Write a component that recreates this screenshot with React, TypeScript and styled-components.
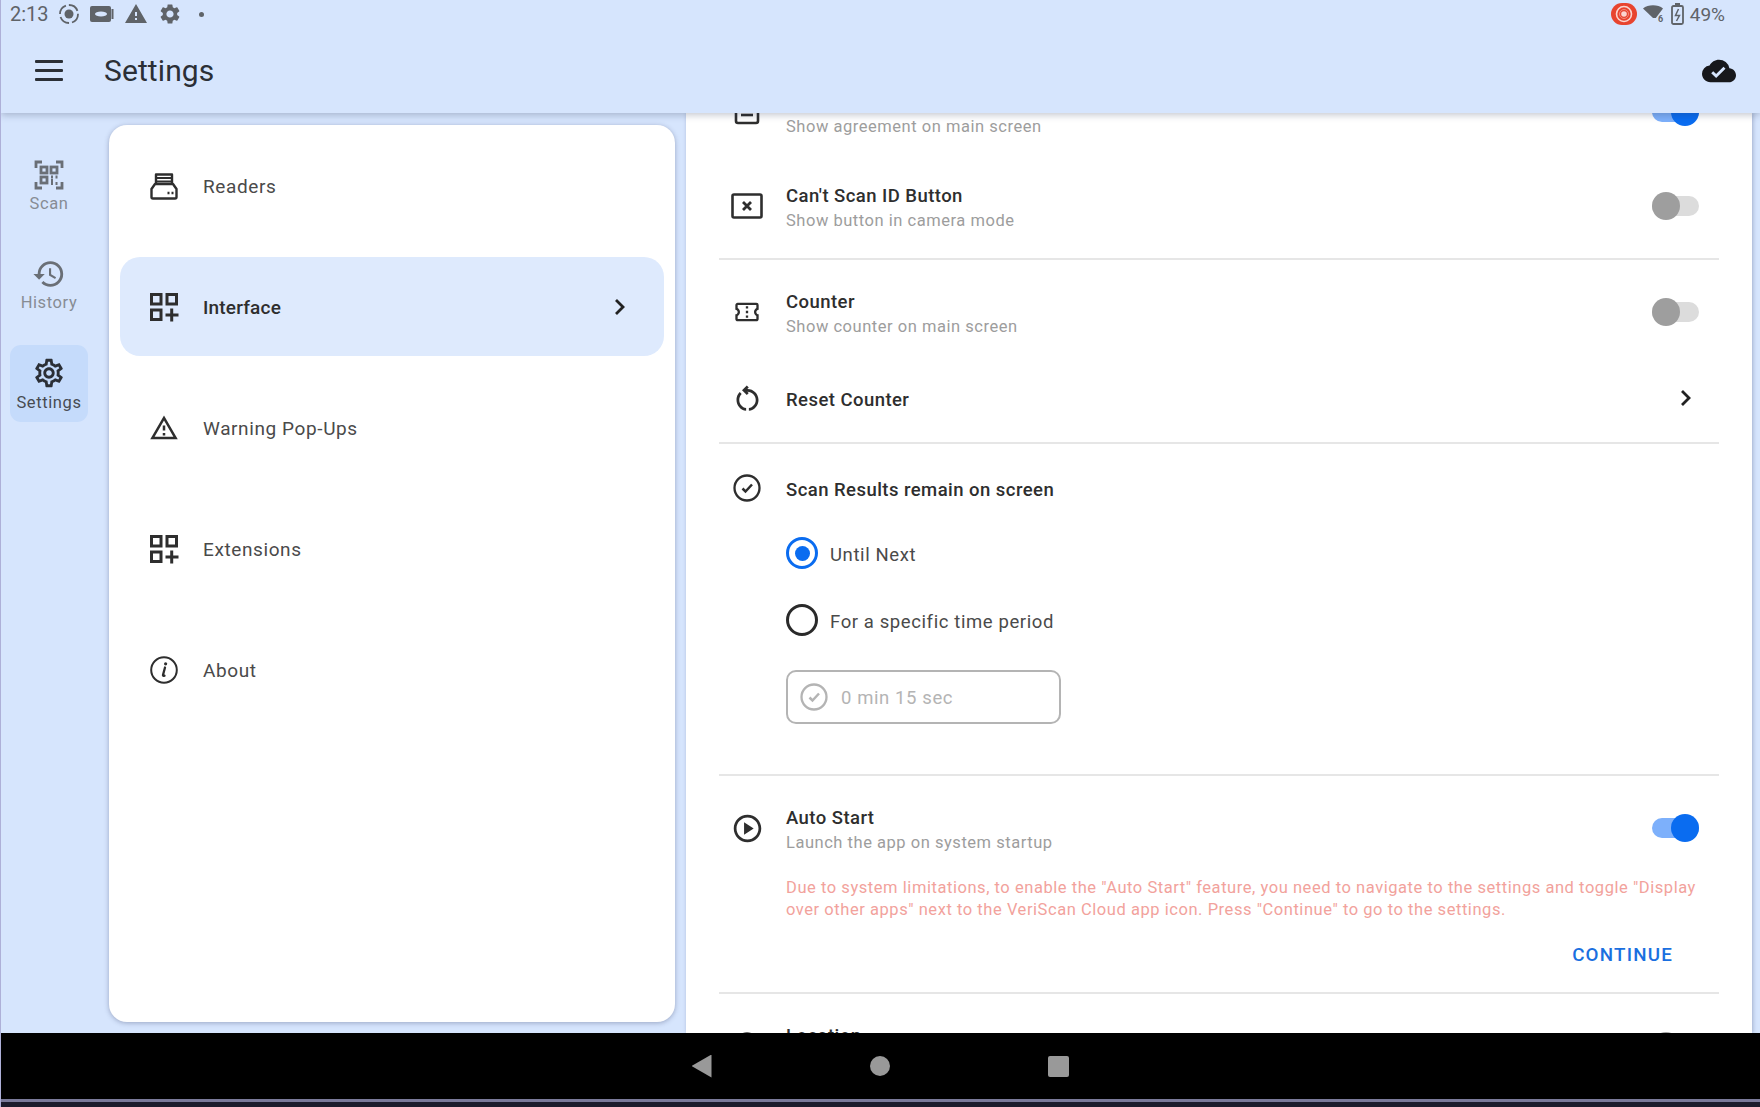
import React from 'react';
import styled, { createGlobalStyle } from 'styled-components';
import { MdHistory, MdOutlineSettings, MdOutlineWarningAmber, MdCloudDone, MdOutlinePlayCircle, MdOutlineConfirmationNumber, MdOutlineRestartAlt, MdWarning, MdSettings } from 'react-icons/md';

const Global = createGlobalStyle`
  html, body { margin: 0; padding: 0; background: #d6e5fd; }
  body { font-family: Roboto, "Liberation Sans", sans-serif; }
  * { box-sizing: border-box; }
`;

const Page = styled.div`
  width: 1760px;
  height: 1107px;
  display: flex;
  flex-direction: column;
  overflow: hidden;
  background: #d6e5fd;
  border-left: 1px solid #aeb0d8;
`;

const Header = styled.header`
  height: 113px;
  flex: none;
  position: relative;
  z-index: 2;
  background: #d6e5fd;
  box-shadow: 0 2px 7px rgba(40, 50, 80, 0.28);
`;

const StatusBar = styled.div`
  height: 30px;
  display: flex;
  align-items: center;
  padding: 0 35px 2px 9px;
  color: #5f6368;
  font-size: 19px;
`;

const StatusGroup = styled.div<{ $gap: number }>`
  display: flex;
  align-items: center;
  gap: ${(p) => p.$gap}px;
`;

const Time = styled.span`
  width: 38px;
  font-size: 20px;
`;

const StatusDot = styled.span`
  width: 5px;
  height: 5px;
  margin-left: 7px;
  border-radius: 50%;
  background: #5f6368;
`;

const Spacer = styled.div`
  flex: 1;
`;

const RecordPill = styled.div`
  width: 26px;
  height: 22px;
  border-radius: 11px;
  background: #e8442f;
  display: flex;
  align-items: center;
  justify-content: center;
`;

const Toolbar = styled.div`
  height: 83px;
  display: flex;
  align-items: center;
  padding: 0 24px 2px 34px;
  color: #2b2f36;
`;

const Burger = styled.div`
  width: 28px;
  height: 21px;
  margin-right: 41px;
  display: flex;
  flex-direction: column;
  justify-content: space-between;
  span {
    height: 3px;
    background: #2b2f36;
    border-radius: 1px;
  }
`;

const Title = styled.h1`
  margin: 0;
  flex: 1;
  font-size: 30px;
  font-weight: 400;
  letter-spacing: 0.1px;
`;

const Middle = styled.div`
  flex: 1;
  min-height: 0;
  display: flex;
`;

const Rail = styled.nav`
  width: 108px;
  flex: none;
  display: flex;
  flex-direction: column;
  gap: 22px;
  padding: 34px 0 0 9px;
`;

const RailItem = styled.div<{ $active?: boolean }>`
  width: 78px;
  height: 77px;
  padding-top: 13px;
  border-radius: 11px;
  display: flex;
  flex-direction: column;
  align-items: center;
  background: ${(p) => (p.$active ? '#c5dbfb' : 'transparent')};
  color: ${(p) => (p.$active ? '#2b2f36' : '#6a6f76')};
  svg {
    display: block;
    margin: -2px 0;
  }
`;

const RailLabel = styled.span<{ $active?: boolean }>`
  margin-top: ${(p) => (p.$active ? 3 : 2)}px;
  font-size: 16.5px;
  letter-spacing: 0.6px;
  line-height: 24px;
  color: ${(p) => (p.$active ? '#474b52' : '#878c94')};
`;

const MenuCard = styled.aside`
  width: 566px;
  flex: none;
  margin: 12px 11px 11px 0;
  padding: 11px;
  border-radius: 18px;
  background: #fff;
  box-shadow: 0 1px 5px rgba(40, 50, 90, 0.35);
  display: flex;
  flex-direction: column;
  gap: 22px;
`;

const MenuItem = styled.div<{ $active?: boolean }>`
  height: 99px;
  flex: none;
  display: flex;
  align-items: center;
  gap: 24px;
  padding: 0 38px 0 29px;
  border-radius: 20px;
  background: ${(p) => (p.$active ? '#deeafd' : 'transparent')};
  color: #2e2e2e;
  svg {
    flex: none;
  }
`;

const MenuLabel = styled.span<{ $active?: boolean }>`
  flex: 1;
  padding-top: 2px;
  font-size: 19px;
  letter-spacing: ${(p) => (p.$active ? '0.18px' : '0.6px')};
  font-weight: ${(p) => (p.$active ? 500 : 400)};
  color: ${(p) => (p.$active ? '#2e2e2e' : '#4a4a4a')};
`;

const Panel = styled.main`
  flex: 1;
  min-width: 0;
  margin-right: 8px;
  padding: 0 33px;
  background: #fff;
  overflow: hidden;
  box-shadow: 1px 0 4px rgba(40, 50, 90, 0.3);
`;

const ScrolledList = styled.div`
  margin-top: -43px;
`;

const Row = styled.div<{ $height: number }>`
  height: ${(p) => p.$height}px;
  display: flex;
  align-items: center;
  padding-right: 20px;
`;

const RowIcon = styled.div`
  width: 56px;
  flex: none;
  margin-right: 11px;
  display: flex;
  justify-content: center;
  color: #2e2e2e;
`;

const RowText = styled.div`
  flex: 1;
  margin-bottom: -4px;
`;

const RowTitle = styled.div`
  font-size: 18.5px;
  font-weight: 500;
  line-height: 24px;
  letter-spacing: 0.45px;
  color: #2e2e2e;
`;

const RowSub = styled.div`
  font-size: 16.5px;
  line-height: 25px;
  letter-spacing: 0.53px;
  color: #9d9d9d;
`;

const RowChevron = styled.div`
  margin-right: 7px;
  display: flex;
`;

const Switch = styled.div<{ $on?: boolean }>`
  width: 47px;
  height: 20px;
  flex: none;
  position: relative;
  border-radius: 10px;
  background: ${(p) => (p.$on ? '#7db0fb' : '#dcdcdc')};
  &::after {
    content: '';
    position: absolute;
    top: -4px;
    width: 28px;
    height: 28px;
    border-radius: 50%;
    ${(p) => (p.$on ? 'right: 0;' : 'left: 0;')}
    background: ${(p) => (p.$on ? '#0a6cf0' : '#9e9e9e')};
  }
`;

const Divider = styled.hr<{ $top?: number }>`
  height: 2px;
  margin: ${(p) => p.$top ?? 0}px 0 0;
  border: 0;
  background: #e6e6e6;
`;

const RadioGroup = styled.div`
  display: flex;
  flex-direction: column;
  gap: 25px;
  padding-left: 67px;
`;

const RadioRow = styled.div`
  height: 42px;
  display: flex;
  align-items: center;
  gap: 12px;
  font-size: 18.5px;
  letter-spacing: 0.6px;
  color: #4a4a4a;
`;

const RadioText = styled.span`
  padding-top: 3px;
`;

const RadioMark = styled.span<{ $on?: boolean }>`
  width: 32px;
  height: 32px;
  flex: none;
  border-radius: 50%;
  border: 3.5px solid ${(p) => (p.$on ? '#0a6cf0' : '#2a2a2a')};
  display: flex;
  align-items: center;
  justify-content: center;
  &::after {
    content: '';
    display: ${(p) => (p.$on ? 'block' : 'none')};
    width: 15px;
    height: 15px;
    border-radius: 50%;
    background: #0a6cf0;
  }
`;

const TimeField = styled.div`
  width: 275px;
  height: 54px;
  margin: 29px 0 0 67px;
  padding-left: 12px;
  display: flex;
  align-items: center;
  gap: 13px;
  border: 2px solid #b4b4b4;
  border-radius: 10px;
  font-size: 18.5px;
  letter-spacing: 0.6px;
  color: #b4b4b4;
`;

const TimeValue = styled.span`
  padding-top: 2px;
`;

const Notice = styled.p`
  margin: -3px 0 0 67px;
  font-size: 16.5px;
  line-height: 22px;
  letter-spacing: 0.55px;
  white-space: nowrap;
  color: #f2a29c;
`;

const ActionRow = styled.div`
  height: 24px;
  margin-top: 22px;
  padding-right: 46px;
  display: flex;
  justify-content: flex-end;
  align-items: center;
  font-size: 18.8px;
  font-weight: 500;
  letter-spacing: 1.2px;
  color: #1a6fe0;
`;

const NavBar = styled.footer`
  height: 74px;
  flex: none;
  position: relative;
  z-index: 2;
  margin-left: -1px;
  background: #000;
  border-bottom: 5px solid #1c1c2c;
`;

const NavButtons = styled.div`
  height: 66px;
  display: flex;
  align-items: center;
  justify-content: center;
  gap: 158px;
`;

const NavLine = styled.div`
  height: 3px;
  background: #7a7a9a;
`;

const NavBack = styled.div`
  width: 20px;
  height: 23px;
  background: #999;
  clip-path: polygon(100% 0, 100% 100%, 0 50%);
`;

const NavHome = styled.div`
  width: 20px;
  height: 20px;
  border-radius: 50%;
  background: #999;
`;

const NavRecent = styled.div`
  width: 21px;
  height: 21px;
  border-radius: 2px;
  background: #999;
`;

const ScanIcon = () => (
  <svg width="34" height="34" viewBox="-2 -2 34 34" fill="none" stroke="currentColor" strokeWidth="2.800">
    <path d="M2 8V2h6M22 2h6v6M2 22v6h6M28 22v6h-6" />
    <rect x="7" y="7" width="6" height="6" />
    <rect x="17" y="7" width="6" height="6" />
    <rect x="7" y="17" width="6" height="6" />
    <path d="M17 17h2.400M21.500 17h2M17 20.500h2.400M21.500 23.500h2M17 23.500h2.400" strokeDasharray="2 1" />
  </svg>
);

const ReadersIcon = () => (
  <svg width="30" height="30" viewBox="0 0 30 30" fill="none" stroke="currentColor" strokeWidth="2.400" strokeLinejoin="round">
    <path d="M7 13V3.500h16V13" />
    <path d="M7 7h16M7 10.500h16" strokeWidth="2" />
    <path d="M6 13h18l3.500 5v8a1.500 1.500 0 0 1-1.500 1.500H4A1.500 1.500 0 0 1 2.500 26v-8z" />
    <path d="M18.500 22h2M22.500 22h2" />
  </svg>
);

const TilesIcon = () => (
  <svg width="30" height="30" viewBox="0 0 30 30" fill="none" stroke="currentColor" strokeWidth="3">
    <rect x="2.500" y="2.500" width="9.500" height="9.500" />
    <rect x="18" y="2.500" width="9.500" height="9.500" />
    <rect x="2.500" y="18" width="9.500" height="9.500" />
    <path d="M22.700 16.500v13M16.500 23h13" />
  </svg>
);

const InfoIcon = () => (
  <svg width="30" height="30" viewBox="0 0 30 30" fill="none" stroke="currentColor">
    <circle cx="15" cy="15" r="12.800" strokeWidth="2" />
    <path d="M16 12.500l-2 7.500q-.3 1.300 1.500.6" strokeWidth="2.300" strokeLinecap="round" />
    <circle cx="16.600" cy="8.800" r="1.600" fill="currentColor" stroke="none" />
  </svg>
);

const ChevronIcon = () => (
  <svg width="12" height="18" viewBox="0 0 12 18" fill="none" stroke="#222" strokeWidth="2.800">
    <path d="M2 2l7 7-7 7" />
  </svg>
);

const NoScanIcon = () => (
  <svg width="32" height="26" viewBox="0 0 32 26" fill="none" stroke="currentColor" strokeWidth="2.600">
    <rect x="1.500" y="1.500" width="29" height="23" rx="1.500" />
    <path d="M12 9l8 8M20 9l-8 8" strokeWidth="2.800" />
  </svg>
);

const AgreementIcon = () => (
  <svg width="26" height="26" viewBox="0 0 26 26" fill="none" stroke="currentColor" strokeWidth="2.600">
    <rect x="2" y="2" width="22" height="22" rx="2" />
    <path d="M7 16h12" />
  </svg>
);

const CheckCircleIcon = () => (
  <svg width="28" height="28" viewBox="0 0 28 28" fill="none" stroke="currentColor" strokeWidth="2.300">
    <circle cx="14" cy="14" r="12.500" />
    <path d="M9.500 14.500l3 3L19 10.500" strokeWidth="2.500" />
  </svg>
);

const RecordIcon = () => (
  <svg width="22" height="22" viewBox="0 0 22 22" fill="none" stroke="#5f6368">
    <circle cx="11" cy="11" r="9" strokeWidth="1.800" strokeDasharray="11 3" />
    <circle cx="11" cy="11" r="4.500" fill="#5f6368" stroke="none" />
  </svg>
);

const CastIcon = () => (
  <svg width="24" height="18" viewBox="0 0 24 18">
    <rect x="0" y="1" width="21" height="16" rx="2" fill="#5f6368" />
    <rect x="21.500" y="4" width="2" height="10" fill="#5f6368" />
    <ellipse cx="11" cy="9" rx="6" ry="2.500" fill="#d6e5fd" />
  </svg>
);

const WifiIcon = () => (
  <svg width="22" height="18" viewBox="0 0 22 18">
    <path d="M0 3.500C5-.8 15-.8 20 3.500L12.800 13H10z" fill="#5f6368" />
    <text x="15" y="17" fontSize="9" fontWeight="700" fill="#5f6368" fontFamily="Roboto">6</text>
  </svg>
);

const BatteryIcon = () => (
  <svg width="13" height="22" viewBox="0 0 13 22" fill="none" stroke="#5f6368" strokeWidth="1.800">
    <rect x="1" y="3" width="11" height="18" rx="1.500" />
    <path d="M4 1h5" strokeWidth="2" />
    <path d="M7.500 6L4.500 12.500h4L5.500 18" strokeWidth="1.500" />
  </svg>
);

const RecordGlyph = () => (
  <svg width="18" height="18" viewBox="0 0 18 18" fill="none" stroke="#fbd5cf">
    <circle cx="9" cy="9" r="7.500" strokeWidth="1.600" />
    <circle cx="9" cy="9" r="4.500" strokeWidth="1" stroke="#f28a7a" />
    <circle cx="9" cy="9" r="2.800" fill="#fbd5cf" stroke="none" />
  </svg>
);

const App = () => {
  return (
    <Page>
      <Global />
      <Header>
        <StatusBar>
          <StatusGroup $gap={10}>
            <Time>2:13</Time>
            <RecordIcon />
            <CastIcon />
            <MdWarning size={24} />
            <MdSettings size={24} />
            <StatusDot />
          </StatusGroup>
          <Spacer />
          <StatusGroup $gap={6}>
            <RecordPill>
              <RecordGlyph />
            </RecordPill>
            <WifiIcon />
            <BatteryIcon />
            <span>49%</span>
          </StatusGroup>
        </StatusBar>
        <Toolbar>
          <Burger>
            <span />
            <span />
            <span />
          </Burger>
          <Title>Settings</Title>
          <MdCloudDone size={34} color="#17181c" />
        </Toolbar>
      </Header>

      <Middle>
        <Rail>
          <RailItem>
            <ScanIcon />
            <RailLabel>Scan</RailLabel>
          </RailItem>
          <RailItem>
            <MdHistory size={34} />
            <RailLabel>History</RailLabel>
          </RailItem>
          <RailItem $active>
            <MdOutlineSettings size={34} />
            <RailLabel $active>Settings</RailLabel>
          </RailItem>
        </Rail>

        <MenuCard>
          <MenuItem>
            <ReadersIcon />
            <MenuLabel>Readers</MenuLabel>
          </MenuItem>
          <MenuItem $active>
            <TilesIcon />
            <MenuLabel $active>Interface</MenuLabel>
            <ChevronIcon />
          </MenuItem>
          <MenuItem>
            <MdOutlineWarningAmber size={30} />
            <MenuLabel>Warning Pop-Ups</MenuLabel>
          </MenuItem>
          <MenuItem>
            <TilesIcon />
            <MenuLabel>Extensions</MenuLabel>
          </MenuItem>
          <MenuItem>
            <InfoIcon />
            <MenuLabel>About</MenuLabel>
          </MenuItem>
        </MenuCard>

        <Panel>
          <ScrolledList>
            <Row $height={84}>
              <RowIcon><AgreementIcon /></RowIcon>
              <RowText>
                <RowTitle>Agreement</RowTitle>
                <RowSub>Show agreement on main screen</RowSub>
              </RowText>
              <Switch $on />
            </Row>
            <Row $height={104}>
              <RowIcon><NoScanIcon /></RowIcon>
              <RowText>
                <RowTitle>Can't Scan ID Button</RowTitle>
                <RowSub>Show button in camera mode</RowSub>
              </RowText>
              <Switch />
            </Row>
            <Divider />
            <Row $height={104}>
              <RowIcon><MdOutlineConfirmationNumber size={28} /></RowIcon>
              <RowText>
                <RowTitle>Counter</RowTitle>
                <RowSub>Show counter on main screen</RowSub>
              </RowText>
              <Switch />
            </Row>
            <Row $height={68}>
              <RowIcon><MdOutlineRestartAlt size={33} /></RowIcon>
              <RowText>
                <RowTitle>Reset Counter</RowTitle>
              </RowText>
              <RowChevron><ChevronIcon /></RowChevron>
            </Row>
            <Divider $top={10} />
            <Row $height={88}>
              <RowIcon><CheckCircleIcon /></RowIcon>
              <RowText>
                <RowTitle>Scan Results remain on screen</RowTitle>
              </RowText>
            </Row>
            <RadioGroup>
              <RadioRow><RadioMark $on /><RadioText>Until Next</RadioText></RadioRow>
              <RadioRow><RadioMark /><RadioText>For a specific time period</RadioText></RadioRow>
            </RadioGroup>
            <TimeField>
              <CheckCircleIcon />
              <TimeValue>0 min 15 sec</TimeValue>
            </TimeField>
            <Divider $top={50} />
            <Row $height={104}>
              <RowIcon><MdOutlinePlayCircle size={33} /></RowIcon>
              <RowText>
                <RowTitle>Auto Start</RowTitle>
                <RowSub>Launch the app on system startup</RowSub>
              </RowText>
              <Switch $on />
            </Row>
            <Notice>
              Due to system limitations, to enable the "Auto Start" feature, you need to navigate to the settings and toggle "Display
              <br />
              over other apps" next to the VeriScan Cloud app icon. Press "Continue" to go to the settings.
            </Notice>
            <ActionRow>CONTINUE</ActionRow>
            <Divider $top={25} />
            <Row $height={104}>
              <RowIcon><CheckCircleIcon /></RowIcon>
              <RowText>
                <RowTitle>Location</RowTitle>
                <RowSub>Save location</RowSub>
              </RowText>
              <Switch />
            </Row>
          </ScrolledList>
        </Panel>
      </Middle>

      <NavBar>
        <NavButtons>
          <NavBack />
          <NavHome />
          <NavRecent />
        </NavButtons>
        <NavLine />
      </NavBar>
    </Page>
  );
};

export default App;
